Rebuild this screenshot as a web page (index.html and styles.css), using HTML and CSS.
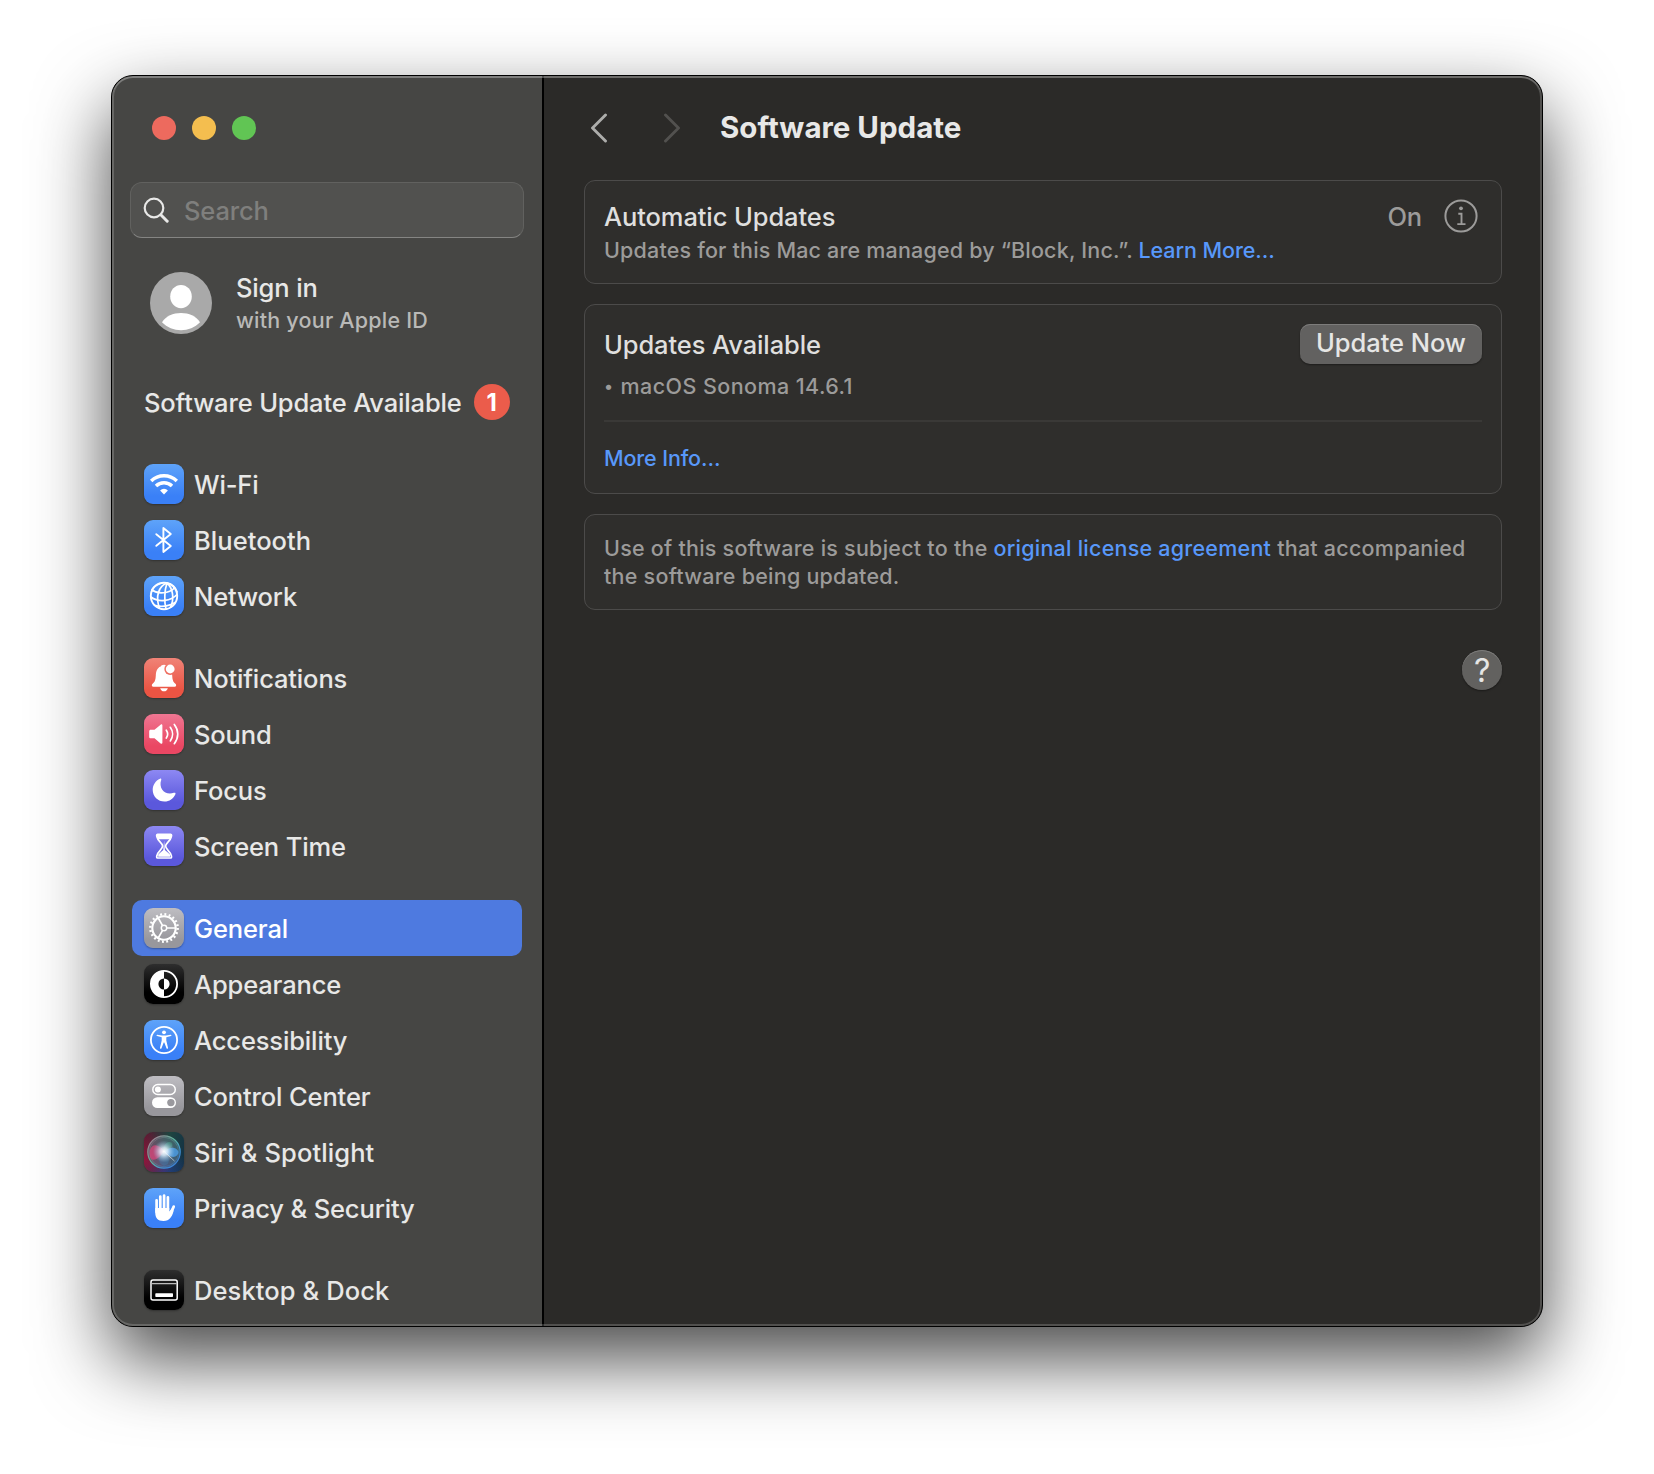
FILE: index.html
```
<!DOCTYPE html>
<html lang="en">
<head>
<meta charset="utf-8">
<title>Software Update</title>
<link rel="stylesheet" href="styles.css">
</head>
<body>
<div class="window">
  <aside class="sidebar">
    <div class="lights"><span class="light red"></span><span class="light yellow"></span><span class="light green"></span></div>
    <div class="search">
      <svg class="search-icon" viewBox="0 0 28 28"><circle cx="12" cy="12" r="9.3"/><path d="M18.8 18.8L25.2 25.2" stroke-width="3"/></svg>
      <span>Search</span>
    </div>
    <div class="account">
      <svg class="avatar" viewBox="0 0 62 62"><circle cx="31" cy="31" r="31" fill="#a9a9a9"/><ellipse cx="31" cy="24.6" rx="10.8" ry="11.7" fill="#fff"/><path d="M12 50.3C16 44 23 41 31 41S46 44 50 50.3C45 55.600 38 58.200 31 58.200S17 55.600 12 50.300Z" fill="#fff"/></svg>
      <div><div class="signin">Sign in</div><div class="signin-sub">with your Apple ID</div></div>
    </div>
    <div class="notice"><span>Software Update Available</span><span class="badge">1</span></div>

    <nav>
      <div class="group">
        <div class="row"><span class="tile blue"><svg viewBox="0 0 40 40"><g class="ln butt" stroke-width="3.5"><path d="M7.200 16.900A18.500 18.500 0 0 1 32.800 16.900"/><path d="M12 21.900A11.600 11.600 0 0 1 28 21.900"/></g><path class="fl" d="M20 30.500L16.100 26.400A5.600 5.600 0 0 1 23.900 26.400Z"/></svg></span><span>Wi-Fi</span></div>
        <div class="row"><span class="tile blue"><svg viewBox="0 0 40 40"><path class="ln" stroke-width="1.9" d="M12.300 14.200L26.800 26L19.400 32V8L26.800 14L12.300 25.800"/></svg></span><span class="wide">Bluetooth</span></div>
        <div class="row"><span class="tile blue"><svg viewBox="0 0 40 40"><g class="ln" stroke-width="1.700"><circle cx="20" cy="20" r="13.200" stroke-width="1.900"/><path d="M23 7C15 10 11 20 15.500 32M23 7C20.500 14 20 25 22 33M23 7C29 12 30.500 23 26.500 31M16 7.500C10.500 9.500 8 12 8 15M23 7C28 7.500 32 11.500 33 16"/><path d="M8 14C14 18.500 25 17.500 30.500 12M7 21C15 27 27 25 33 18.500M10.500 29.200C16 31 24 30.500 31 26.500"/></g></svg></span><span>Network</span></div>
      </div>
      <div class="group">
        <div class="row"><span class="tile red-t"><svg viewBox="0 0 40 40"><mask id="bell"><rect width="40" height="40" fill="#fff"/><circle cx="26.200" cy="11" r="5.900" fill="#000"/></mask><path class="fl" mask="url(#bell)" d="M20 6.800C21.800 6.800 22.800 7.500 23.300 8.600C27 10 28 13.500 28.200 17.500C28.500 22.500 29.300 24 31.200 25.600C32.800 27 32.300 28.800 30.600 28.800H9.400C7.700 28.800 7.200 27 8.800 25.600C10.700 24 11.500 22.500 11.800 17.500C12 13.500 13 10 16.700 8.600C17.200 7.500 18.200 6.800 20 6.800Z"/><circle class="fl" cx="26.200" cy="11" r="4.400"/><path class="fl" d="M16.200 30.200H23.800C23.300 32.300 21.900 33.300 20 33.300S16.700 32.300 16.200 30.200Z"/></svg></span><span>Notifications</span></div>
        <div class="row"><span class="tile pink"><svg viewBox="0 0 40 40"><path class="fl" d="M6.800 15.800H10.500L16.600 10.700C17.500 10 18.400 10.300 18.400 11.400V28.700C18.400 29.800 17.500 30.100 16.600 29.400L10.500 24.300H6.800C5.700 24.300 5.200 23.700 5.200 22.700V17.400C5.200 16.400 5.700 15.800 6.800 15.800Z"/><g class="ln" stroke-width="1.700"><path d="M22.300 16.200C24 18.600 24 21.600 22.300 24"/><path d="M26.300 13.300C29.300 17.400 29.300 22.800 26.300 26.900"/><path d="M30.300 10.500C34.900 16.300 34.900 23.900 30.300 29.700"/></g></svg></span><span>Sound</span></div>
        <div class="row"><span class="tile indigo"><svg viewBox="0 0 40 40"><path class="fl" d="M16 8.700C16.900 8.300 17.600 9 17.200 9.900C14.200 18.300 21.300 26 29.900 22.800C31.200 22.300 31.900 23.100 31.400 24.200C29.500 28.600 25.400 31.600 20.500 31.600C13.900 31.600 8.700 26.400 8.700 19.800C8.700 14.800 11.600 10.600 16 8.700Z"/></svg></span><span>Focus</span></div>
        <div class="row"><span class="tile indigo"><svg viewBox="0 0 40 40"><path class="ln" stroke-width="1.700" d="M13.500 8.300H26.700C27.700 8.300 27.700 9.600 27.200 11C26.300 15.500 21.600 16.800 21.600 20.100S26.300 25 27.200 29.400C27.700 30.800 27.700 32 26.700 32H13.500C12.500 32 12.500 30.800 13 29.400C13.900 25 18.600 23.400 18.600 20.100S13.900 15.500 13 11C12.500 9.600 12.500 8.300 13.500 8.300Z"/><path class="fl" d="M12.800 8H27.400L26.600 13.200H13.600ZM20.100 14.500L20.900 24L26 28.500V30.700H14.200V28.500L19.300 24Z"/></svg></span><span>Screen Time</span></div>
      </div>
      <div class="group">
        <div class="row selected"><span class="tile gray"><svg viewBox="0 0 40 40"><g class="ln butt"><circle cx="20" cy="20" r="11.700" stroke-width="2.100"/><circle cx="20" cy="20" r="13.700" stroke-width="2.400" stroke-dasharray="1.900 2.404"/><circle cx="20" cy="20" r="2.700" stroke-width="1.500"/><path stroke-width="1.700" d="M22.700 20H31.500M18.600 17.600L14.200 10M18.600 22.400L14.200 30"/></g></svg></span><span>General</span></div>
        <div class="row"><span class="tile black"><svg viewBox="0 0 40 40"><circle class="ln" cx="20" cy="20" r="13.100" stroke-width="1.800"/><path class="fl" d="M20 6.900A13.100 13.100 0 0 0 20 33.100V25.600A5.600 5.600 0 0 1 20 14.400ZM20 14.400A5.600 5.600 0 0 1 20 25.600Z"/></svg></span><span>Appearance</span></div>
        <div class="row"><span class="tile blue"><svg viewBox="0 0 40 40"><circle class="ln" cx="20" cy="20" r="13.100" stroke-width="1.800"/><circle class="fl" cx="20" cy="12.300" r="1.900"/><path class="fl" d="M13.300 14.700L18 15.400H22L26.700 14.700C27.600 14.600 27.800 15.800 26.900 16.100L22.300 17.300V20.500L24 27.800C24.200 28.900 22.900 29.200 22.500 28.200L20.300 22.600H19.700L17.500 28.200C17.100 29.200 15.800 28.900 16 27.800L17.700 20.500V17.300L13.100 16.100C12.200 15.800 12.400 14.600 13.300 14.700Z"/></svg></span><span>Accessibility</span></div>
        <div class="row"><span class="tile gray"><svg viewBox="0 0 40 40"><rect class="ln" x="8.800" y="8.500" width="22.500" height="10" rx="5" stroke-width="1.500"/><circle class="fl" cx="13.900" cy="13.500" r="3"/><rect class="fl" x="8" y="21.300" width="24" height="10.700" rx="5.350"/><circle cx="26.900" cy="26.600" r="3.700" fill="#9a999e"/></svg></span><span>Control Center</span></div>
        <div class="row"><span class="tile siri"><svg viewBox="0 0 40 40"><defs><radialGradient id="glow"><stop offset="0" stop-color="#fff"/><stop offset=".35" stop-color="#e6f4ff" stop-opacity=".8"/><stop offset="1" stop-color="#8fc4e8" stop-opacity="0"/></radialGradient><linearGradient id="ring" x1="0" y1="0" x2="1" y2="1"><stop offset="0" stop-color="#b0708c"/><stop offset=".45" stop-color="#5fb59c"/><stop offset=".75" stop-color="#3d8fd6"/><stop offset="1" stop-color="#3b6fd0"/></linearGradient></defs><circle cx="20" cy="20" r="16.200" fill="#6a8a98" fill-opacity=".45" stroke="url(#ring)" stroke-width="1.200"/><circle cx="20" cy="20" r="14.700" fill="none" stroke="url(#ring)" stroke-width=".6" opacity=".7"/><path d="M6 18C8 11 15 12 20 19C15 27 9 30 6.500 26C5.500 23.500 5.500 20.500 6 18Z" fill="#d8457a" opacity=".75"/><path d="M20 20C25 14 33 15 34.500 20C34 26 27 27 20 20Z" fill="#4d9fe8" opacity=".8"/><path d="M20 20C14 25 13 31 20 34C27 32 26 25 20 20Z" fill="#3c7fb5" opacity=".4"/><path d="M20 20C18 13 24 8 28 11C30 14 25 18 20 20Z" fill="#4fc09c" opacity=".35"/><circle cx="20" cy="19.500" r="11" fill="url(#glow)"/><path d="M21 20.500L30.500 29" stroke="#fff" stroke-width="1" opacity=".55"/></svg></span><span class="siri-label">Siri &amp; Spotlight</span></div>
        <div class="row"><span class="tile blue"><svg viewBox="0 0 40 40"><g class="ln" stroke-width="2.700"><path d="M12.600 12.300V24M16.300 8.500V22M20.100 7.600V22M23.900 9.300V22"/><path d="M29.700 18.600L26.300 26.500"/></g><path class="fl" d="M11.250 20H25.250V23.500L28.500 19.500L29.600 23C28 28.500 25.800 33 19.500 33C13.500 33 11.250 29.500 11.250 24.500Z"/></svg></span><span>Privacy &amp; Security</span></div>
      </div>
      <div class="group">
        <div class="row"><span class="tile black"><svg viewBox="0 0 40 40"><rect class="ln" x="7" y="10" width="26.200" height="20" rx="2" stroke-width="1.500"/><path d="M7.500 13.700H32.700" stroke="#bbb" stroke-width="1.300"/><rect class="fl" x="11.300" y="23.200" width="17.700" height="3.800" rx=".7"/></svg></span><span class="desk-label">Desktop &amp; Dock</span></div>
      </div>
    </nav>
  </aside>

  <main class="content">
    <header class="toolbar">
      <svg class="chev" viewBox="0 0 18 30"><path d="M15.500 2L2.500 15L15.500 28"/></svg>
      <svg class="chev off" viewBox="0 0 18 30"><path d="M2.500 2L15.500 15L2.500 28"/></svg>
      <h1>Software Update</h1>
    </header>

    <section class="card auto">
      <div class="auto-text">
        <div class="title">Automatic Updates</div>
        <div class="sub"><span class="managed">Updates for this Mac are managed by “Block, Inc.”.</span> <a class="learn">Learn More…</a></div>
      </div>
      <div class="status">On
        <svg class="info" viewBox="0 0 34 34"><circle cx="17" cy="17" r="15.600" stroke-width="2"/><path d="M14.300 14.700H17.500V25M13.300 25.100H21.500" stroke-width="1.900"/><circle cx="17" cy="9.300" r="1.900" class="dot"/></svg>
      </div>
    </section>

    <section class="card avail">
      <div class="avail-head"><div class="title">Updates Available</div><button>Update Now</button></div>
      <div class="item"><span class="bullet">•</span><span class="os">macOS Sonoma 14.6.1</span></div>
      <div class="more"><a>More Info…</a></div>
    </section>

    <section class="card license">Use of this software is subject to the <a>original license agreement</a> that accompanied<br>the software being updated.</section>

    <div class="help-row"><button class="help">?</button></div>
  </main>
</div>
</body>
</html>
```
FILE: styles.css
```
* { box-sizing: border-box; }

body {
  margin: 0;
  width: 1654px;
  height: 1474px;
  padding: 75px 111px;
  overflow: hidden;
  background: #fff;
  font-family: Inter, "Liberation Sans", sans-serif;
  font-size: 25.5px;
  font-weight: 450;
  letter-spacing: -0.14px;
  color: #e8e8e7;
}

.window {
  position: relative;
  display: flex;
  width: 1432px;
  height: 1252px;
  border: 1px solid #000;
  border-radius: 22px;
  overflow: hidden;
  background: #2b2a28;
  box-shadow: 0 32px 74px rgba(0, 0, 0, 0.72);
}

/* light rim just inside the window edge */
.window::after {
  content: "";
  position: absolute;
  inset: 0;
  border-radius: 21px;
  box-shadow: inset 0 0 0 2px rgba(255, 255, 255, 0.18), inset 0 2px 0 rgba(255, 255, 255, 0.16);
  pointer-events: none;
}

.sidebar {
  width: 432px;
  padding: 40px 18px 0;
  background: #464644;
  border-right: 2px solid #000;
}

.lights { display: flex; gap: 16px; padding-left: 22px; }
.light { width: 24px; height: 24px; border-radius: 50%; }
.red { background: #ed6a5e; }
.yellow { background: #f4be4f; }
.green { background: #61c554; }

.search {
  display: flex;
  align-items: center;
  gap: 14px;
  width: 394px;
  height: 56px;
  margin-top: 42px;
  padding-left: 11px;
  border: 1px solid #61615f;
  border-bottom-color: #858583;
  border-radius: 12px;
  background: #51514f;
  color: #7f7f7d;
}
.search-icon { width: 28px; height: 28px; fill: none; stroke: #e8e8e7; stroke-width: 2.2; stroke-linecap: round; }

.account { display: flex; align-items: center; gap: 24px; height: 62px; margin-top: 34px; padding-left: 20px; }
.avatar { width: 62px; height: 62px; }
.signin { line-height: 34px; }
.signin-sub { line-height: 31px; font-size: 21.5px; letter-spacing: 0.22px; color: #b9b9b7; }

.notice { display: flex; align-items: center; gap: 12px; height: 56px; margin-top: 40px; padding-left: 14px; letter-spacing: -0.15px; }
.badge {
  width: 36px;
  height: 36px;
  border-radius: 50%;
  background: #eb5c4b;
  color: #fff;
  font-size: 24px;
  font-weight: 700;
  line-height: 37px;
  text-align: center;
}

.group { margin-top: 26px; }
.row { display: flex; align-items: center; gap: 10px; width: 390px; height: 56px; margin-left: 2px; padding-left: 12px; border-radius: 10px; }
.row.selected { background: #4e7ae0; color: #fff; }
.wide { letter-spacing: 0.05px; }
.siri-label { letter-spacing: 0.1px; }
.desk-label { letter-spacing: 0.1px; }

.tile { width: 40px; height: 40px; border-radius: 9px; box-shadow: 0 1px 2px rgba(0, 0, 0, 0.3); overflow: hidden; }
.tile svg { display: block; width: 40px; height: 40px; }
.blue { background: linear-gradient(#5ea3f9, #3a80f7 80%); }
.red-t { background: linear-gradient(#f08377, #eb5443 80%); }
.pink { background: linear-gradient(#ef7692, #ea4763 80%); }
.indigo { background: linear-gradient(#8d88f3, #5b58dc 80%); }
.gray { background: linear-gradient(#bebdc2, #98979c 80%); }
.black { background: linear-gradient(#2e2e2e, #000 70%); }
.siri {
  background:
    radial-gradient(circle at 0 70%, rgba(150, 20, 60, 0.9), transparent 60%),
    radial-gradient(circle at 50% 100%, rgba(35, 60, 140, 0.9), transparent 55%),
    linear-gradient(100deg, #5c1730, #1f4540 55%, #123045);
}
.ln { fill: none; stroke: #fff; stroke-linecap: round; stroke-linejoin: round; }
.butt { stroke-linecap: butt; }
.fl { fill: #fff; }

.content { flex: 1; padding: 0 40px; }

.toolbar { display: flex; align-items: center; height: 104px; padding-left: 6px; }
.chev { width: 18px; height: 30px; margin: -1px 55px 0 0; fill: none; stroke: #adadab; stroke-width: 2.9; stroke-linecap: round; stroke-linejoin: round; }
.chev.off { margin-right: 39px; stroke: #52514f; }
h1 { margin: 0; padding-bottom: 2px; font-size: 29.5px; font-weight: 700; letter-spacing: 0; }

.card { width: 918px; margin-bottom: 20px; border: 1px solid #4c4b4a; border-radius: 11px; background: #2f2e2c; }
.title { color: #dfdfde; letter-spacing: -0.1px; }
a { color: #5898fa; }

.auto { display: flex; justify-content: space-between; height: 104px; padding: 17px 23px 0 19px; }
.auto .title { line-height: 37px; }
.sub { font-size: 21.5px; line-height: 30px; color: #9c9b9a; }
.managed { letter-spacing: 0.18px; }
.learn { letter-spacing: -0.08px; }
.status { display: flex; align-items: center; gap: 23px; height: 37px; color: #9c9b9a; }
.info { width: 34px; height: 34px; margin: -1px 0 0 -1px; fill: none; stroke: #9c9b9a; }
.info .dot { fill: #9c9b9a; stroke: none; }

.avail { height: 190px; padding: 19px 19px 0; }
.avail-head { display: flex; justify-content: space-between; align-items: center; height: 40px; }
.avail-head .title { padding-top: 1px; }
button { border: 0; color: #e6e6e5; font: inherit; letter-spacing: inherit; }
.avail button {
  width: 182px;
  height: 40px;
  padding: 0 0 4px;
  border-radius: 10px;
  background: #626160;
  box-shadow: inset 0 1px 0 #7d7c7b, 0 1px 2px rgba(0, 0, 0, 0.4);
  letter-spacing: -0.06px;
}
.item { display: flex; height: 58px; padding-top: 8px; border-bottom: 2px solid #3a3937; font-size: 21.5px; line-height: 28px; color: #9c9b9a; }
.bullet { width: 16.5px; font-size: 17px; }
.os { letter-spacing: 0.43px; }
.more { padding-top: 22px; font-size: 21.5px; line-height: 28px; letter-spacing: -0.14px; }

.license { height: 96px; padding: 19px; font-size: 21.5px; line-height: 28px; letter-spacing: 0.24px; color: #9c9b9a; }

.help-row { display: flex; justify-content: flex-end; padding-top: 20px; }
.help {
  width: 40px;
  height: 40px;
  padding: 0;
  border-radius: 50%;
  background: #62615f;
  box-shadow: inset 0 1px 0 #7d7c7b, 0 1px 2px rgba(0, 0, 0, 0.4);
  font-size: 32px;
  font-weight: 400;
}
```
